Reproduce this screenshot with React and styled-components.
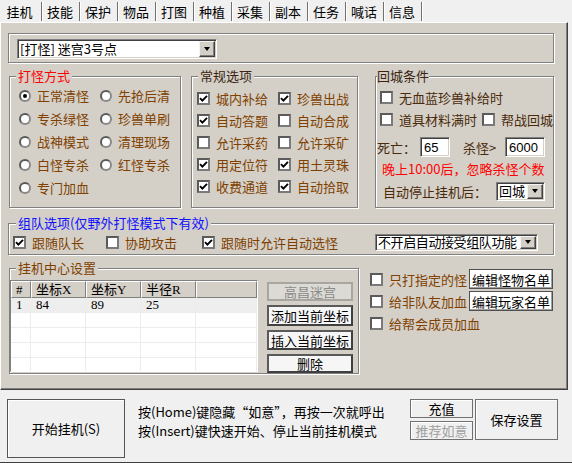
import React from 'react';
import styled, { createGlobalStyle } from 'styled-components';

const FACE = '#d4d0c8';
const BROWN = '#804000';

const GlobalStyle = createGlobalStyle`
  html, body {
    margin: 0;
    padding: 0;
    background: #f0f0f0;
  }
  body {
    font-family: "Noto Sans CJK SC", "Liberation Sans", sans-serif;
    font-size: 13px;
    color: #000;
  }
`;

const tabs = ['挂机', '技能', '保护', '物品', '打图', '种植', '采集', '副本', '任务', '喊话', '信息'];

const modes = [
  ['正常清怪', true], ['先抢后清', false],
  ['专杀绿怪', false], ['珍兽单刷', false],
  ['战神模式', false], ['清理现场', false],
  ['白怪专杀', false], ['红怪专杀', false],
  ['专门加血', false],
];

const general = [
  ['城内补给', true], ['珍兽出战', true],
  ['自动答题', true], ['自动合成', false],
  ['允许采药', false], ['允许采矿', false],
  ['用定位符', true], ['用土灵珠', true],
  ['收费通道', true], ['自动拾取', true],
];

const points = [{ n: 1, x: 84, y: 89, r: 25 }];

const Check = ({ on }) => (
  <Box>
    {on && (
      <svg width="9" height="9" viewBox="0 0 9 9">
        <path d="M1 4.2 3.4 6.6 8 1.8" fill="none" stroke="#000" strokeWidth="1.9" />
      </svg>
    )}
  </Box>
);

const Combo = ({ w, h, text, tight }) => (
  <ComboBox $w={w} $h={h}>
    <ComboText $tight={tight}>{text}</ComboText>
    <DropButton>
      <Arrow />
    </DropButton>
  </ComboBox>
);

const App = () => (
  <Window>
    <GlobalStyle />
    <TabStrip>
      {tabs.map((t, i) => (
        <Tab key={t} $w={i === 0 ? 43 : 38}>{t}</Tab>
      ))}
    </TabStrip>

    <Panel>
      <ComboFrame>
        <Combo w={200} h={20} text="[打怪] 迷宫3号点" />
      </ComboFrame>

      <GroupRow>
        <Group $w={172} $h={139} $ml={1}>
          <Legend $color="#ff0000">打怪方式</Legend>
          <RadioGrid>
            {modes.map(([label, on]) => (
              <Option key={label}>
                <Radio $on={on} />
                {label}
              </Option>
            ))}
          </RadioGrid>
        </Group>

        <Group $w={167} $h={139} $ml={10}>
          <Legend $color="#3a2410">常规选项</Legend>
          <CheckGrid>
            {general.map(([label, on]) => (
              <Option key={label}>
                <Check on={on} />
                {label}
              </Option>
            ))}
          </CheckGrid>
        </Group>

        <Group $w={179} $h={139} $ml={17}>
          <Legend $color="#3a2410" $ml={1} $pad={0}>回城条件</Legend>
          <ReturnBody>
            <Line $h={22} $indent={3}>
              <Option $color="#4a2a0a">
                <Check />
                无血蓝珍兽补给时
              </Option>
            </Line>
            <Line $h={22} $indent={3}>
              <Option $color="#4a2a0a">
                <Check />
                道具材料满时
              </Option>
              <Option $color="#4a2a0a" $ml={5}>
                <Check />
                帮战回城
              </Option>
            </Line>
            <Line $h={22} $mt={6}>
              <FieldLabel $w={43}>死亡：</FieldLabel>
              <Input $w={30}>65</Input>
              <FieldLabel $w={42} $ml={13}>杀怪&gt;</FieldLabel>
              <Input $w={40}>6000</Input>
            </Line>
            <Line $h={20} $indent={5}>
              <Warning>晚上10:00后，忽略杀怪个数</Warning>
            </Line>
            <Line $h={20} $mt={3} $indent={6}>
              <FieldLabel $w={113}>自动停止挂机后：</FieldLabel>
              <Combo w={49} h={19} text="回城" />
            </Line>
          </ReturnBody>
        </Group>
      </GroupRow>

      <Group $w={546} $h={39} $mt={8}>
        <Legend $color="#1010ff" $ml={7}>组队选项(仅野外打怪模式下有效)</Legend>
        <TeamBody>
          <Cell $w={93}>
            <Option><Check on />跟随队长</Option>
          </Cell>
          <Cell $w={96}>
            <Option><Check />协助攻击</Option>
          </Cell>
          <Cell $w={173}>
            <Option><Check on />跟随时允许自动选怪</Option>
          </Cell>
          <Combo w={163} h={17} text="不开启自动接受组队功能" tight />
        </TeamBody>
      </Group>

      <BottomRow>
        <Group $w={350} $h={113} $ml={1}>
          <Legend $color={BROWN}>挂机中心设置</Legend>
          <CenterBody>
            <ListView>
              <HeadCell>#</HeadCell>
              <HeadCell>坐标X</HeadCell>
              <HeadCell>坐标Y</HeadCell>
              <HeadCell>半径R</HeadCell>
              <HeadCell />
              {points.map(p => (
                <React.Fragment key={p.n}>
                  <RowCell $lit>{p.n}</RowCell>
                  <RowCell $lit>{p.x}</RowCell>
                  <RowCell $lit>{p.y}</RowCell>
                  <RowCell $lit>{p.r}</RowCell>
                  <RowCell $lit />
                </React.Fragment>
              ))}
              {Array.from({ length: 20 }, (_, i) => <RowCell key={i} />)}
            </ListView>
            <ButtonColumn>
              <MapButton>高昌迷宫</MapButton>
              <HeavyButton $h={21}>添加当前坐标</HeavyButton>
              <HeavyButton $h={20}>插入当前坐标</HeavyButton>
              <HeavyButton $h={19}>删除</HeavyButton>
            </ButtonColumn>
          </CenterBody>
        </Group>

        <SideColumn>
          <SideRow>
            <Option><Check />只打指定的怪</Option>
            <EditButton>编辑怪物名单</EditButton>
          </SideRow>
          <SideRow>
            <Option><Check />给非队友加血</Option>
            <EditButton>编辑玩家名单</EditButton>
          </SideRow>
          <SideRow>
            <Option><Check />给帮会成员加血</Option>
          </SideRow>
        </SideColumn>
      </BottomRow>
    </Panel>

    <Footer>
      <StartButton>开始挂机(S)</StartButton>
      <HintText>
        <div>按(Home)键隐藏“如意”，再按一次就呼出</div>
        <div>按(Insert)键快速开始、停止当前挂机模式</div>
      </HintText>
      <SmallButtons>
        <FlatButton $h={19}>充值</FlatButton>
        <FlatButton $h={19} $disabled>推荐如意</FlatButton>
      </SmallButtons>
      <FlatButton $w={83} $h={41} $big>保存设置</FlatButton>
    </Footer>
  </Window>
);

export default App;

const Window = styled.div`
  width: 572px;
  height: 463px;
  box-sizing: border-box;
  display: flex;
  flex-direction: column;
  background: #f0f0f0;
  border-bottom: 1px solid #404040;
  overflow: hidden;
`;

const TabStrip = styled.div`
  height: 22px;
  flex: none;
  display: flex;
  background: #f0f0f0;
`;

const Tab = styled.div`
  width: ${p => p.$w}px;
  box-sizing: border-box;
  margin: 2px 0 1px;
  display: flex;
  align-items: center;
  justify-content: center;
  padding-right: 3px;
  font-size: 13px;
  line-height: 15px;
  border-right: 1px solid #fff;
  box-shadow: inset -1px 0 #707070;
`;

const Panel = styled.div`
  width: 568px;
  height: 368px;
  flex: none;
  box-sizing: border-box;
  background: ${FACE};
  border-top: 1px solid #fff;
  border-left: 1px solid #fff;
  border-right: 1px solid #404040;
  border-bottom: 1px solid #404040;
  box-shadow: inset -1px -1px #808080;
  padding: 10px 0 0 7px;
  display: flex;
  flex-direction: column;
  align-items: flex-start;
`;

const ComboFrame = styled.div`
  width: 546px;
  height: 30px;
  box-sizing: border-box;
  border: 1px solid #808080;
  box-shadow: inset 1px 1px #fff, 1px 1px #fff;
  padding: 5px 0 0 8px;
`;

const ComboBox = styled.div`
  width: ${p => p.$w}px;
  height: ${p => p.$h}px;
  box-sizing: border-box;
  flex: none;
  display: flex;
  align-items: center;
  background: #fff;
  border: 1px solid;
  border-color: #808080 #fff #fff #808080;
  box-shadow: inset 1px 1px #404040, inset -1px -1px ${FACE};
  padding-left: 2px;
  color: #000;
`;

const ComboText = styled.span`
  flex: 1;
  min-width: 0;
  white-space: nowrap;
  line-height: 18px;
  letter-spacing: ${p => (p.$tight ? '-0.4px' : 'normal')};
`;

const DropButton = styled.div`
  width: 16px;
  align-self: stretch;
  box-sizing: border-box;
  margin: 1px 1px 1px 0;
  background: ${FACE};
  border: 1px solid;
  border-color: #f4f4f4 #404040 #404040 #f4f4f4;
  box-shadow: inset -1px -1px #808080;
  display: flex;
  align-items: center;
  justify-content: center;
`;

const Arrow = styled.span`
  width: 0;
  height: 0;
  border-left: 3.5px solid transparent;
  border-right: 3.5px solid transparent;
  border-top: 4px solid #000;
`;

const GroupRow = styled.div`
  display: flex;
  align-items: flex-start;
  margin-top: 6px;
`;

const Group = styled.fieldset`
  width: ${p => p.$w}px;
  height: ${p => p.$h}px;
  min-width: 0;
  box-sizing: border-box;
  margin: ${p => p.$mt || 0}px 0 0 ${p => p.$ml || 0}px;
  padding: 0;
  border: 1px solid #808080;
  box-shadow: inset 1px 1px #fff, 1px 1px #fff;
`;

const Legend = styled.legend`
  margin-left: ${p => p.$ml ?? 6}px;
  padding: 0 ${p => p.$pad ?? 2}px;
  font-size: 13px;
  line-height: 14px;
  color: ${p => p.$color};
  background: ${FACE};
  white-space: nowrap;
`;

const RadioGrid = styled.div`
  display: grid;
  grid-template-columns: 81px 1fr;
  grid-auto-rows: 23px;
  padding: 1px 0 0 9px;
`;

const CheckGrid = styled.div`
  display: grid;
  grid-template-columns: 81px 1fr;
  grid-auto-rows: 22px;
  padding: 4px 0 0 5px;
`;

const Option = styled.div`
  display: flex;
  align-items: center;
  gap: 6px;
  margin-left: ${p => p.$ml || 0}px;
  color: ${p => p.$color || BROWN};
  white-space: nowrap;
  line-height: 15px;
`;

const Radio = styled.span`
  width: 12px;
  height: 12px;
  flex: none;
  box-sizing: border-box;
  border-radius: 50%;
  background: #fff;
  border: 2px solid;
  border-color: #5a5a5a #8a8a8a #8a8a8a #5a5a5a;
  display: flex;
  align-items: center;
  justify-content: center;

  &::after {
    content: '';
    width: 4px;
    height: 4px;
    border-radius: 50%;
    background: ${p => (p.$on ? '#000' : 'transparent')};
  }
`;

const Box = styled.span`
  width: 13px;
  height: 13px;
  flex: none;
  box-sizing: border-box;
  background: #fff;
  border: 2px solid;
  border-color: #5a5a5a #7a7a7a #7a7a7a #5a5a5a;
  display: flex;
  align-items: center;
  justify-content: center;
`;

const ReturnBody = styled.div`
  display: flex;
  flex-direction: column;
  padding: 3px 0 0 1px;
`;

const Line = styled.div`
  height: ${p => p.$h}px;
  margin-top: ${p => p.$mt || 0}px;
  padding-left: ${p => p.$indent || 0}px;
  display: flex;
  align-items: center;
`;

const FieldLabel = styled.span`
  width: ${p => p.$w}px;
  margin-left: ${p => p.$ml || 0}px;
  flex: none;
  color: #4a2a0a;
  white-space: nowrap;
  line-height: 15px;
`;

const Input = styled.div`
  width: ${p => p.$w}px;
  height: 20px;
  box-sizing: border-box;
  flex: none;
  background: #fff;
  border: 1px solid;
  border-color: #808080 #fff #fff #808080;
  box-shadow: inset 1px 1px #404040, inset -1px -1px ${FACE};
  padding: 2px 0 0 3px;
  line-height: 15px;
  color: #000;
  font-family: "Liberation Sans", sans-serif;
`;

const Warning = styled.span`
  color: #ff0000;
  white-space: nowrap;
  line-height: 15px;
`;

const TeamBody = styled.div`
  height: 24px;
  display: flex;
  align-items: center;
  padding-left: 4px;
`;

const Cell = styled.div`
  width: ${p => p.$w}px;
  flex: none;
`;

const BottomRow = styled.div`
  display: flex;
  align-items: flex-start;
  margin-top: 6px;
`;

const CenterBody = styled.div`
  display: flex;
  align-items: flex-start;
  padding-top: 5px;
`;

const ListView = styled.div`
  width: 248px;
  height: 92px;
  box-sizing: border-box;
  overflow: hidden;
  background: #fff;
  border: 1px solid;
  border-color: #808080 #fff #fff #808080;
  box-shadow: inset 1px 1px #404040;
  display: grid;
  grid-template-columns: 20px 55px 55px 55px 1fr;
  grid-template-rows: 17px;
  grid-auto-rows: 15px;
  align-content: start;
  font-family: "Liberation Serif", "Noto Sans CJK SC", serif;
`;

const HeadCell = styled.div`
  box-sizing: border-box;
  background: ${FACE};
  border-top: 1px solid #fff;
  border-left: 1px solid #fff;
  border-right: 1px solid #808080;
  border-bottom: 1px solid #808080;
  padding-left: 4px;
  line-height: 15px;
  color: #000;
`;

const RowCell = styled.div`
  box-sizing: border-box;
  background: ${p => (p.$lit ? '#eeeeee' : '#fff')};
  border-right: 1px solid #ececec;
  border-bottom: 1px solid #ececec;
  padding-left: 5px;
  line-height: 14px;
  color: #000;
`;

const ButtonColumn = styled.div`
  display: flex;
  flex-direction: column;
  gap: 4px;
  margin-left: 9px;
  padding-top: 2px;
`;

const MapButton = styled.div`
  width: 86px;
  height: 19px;
  box-sizing: border-box;
  border: 2px solid #a8a6a0;
  background: #dcdad4;
  color: #8a8a8a;
  display: flex;
  align-items: center;
  justify-content: center;
  line-height: 15px;
`;

const HeavyButton = styled.div`
  width: 86px;
  height: ${p => p.$h}px;
  box-sizing: border-box;
  border: 2px solid;
  border-color: #5a5a5a #404040 #404040 #5a5a5a;
  background: #f6f6f6;
  color: #000;
  display: flex;
  align-items: center;
  justify-content: center;
  line-height: 15px;
`;

const SideColumn = styled.div`
  width: 183px;
  margin: 7px 0 0 11px;
  display: flex;
  flex-direction: column;
`;

const SideRow = styled.div`
  height: 22px;
  display: flex;
  align-items: center;
  justify-content: space-between;
`;

const EditButton = styled.div`
  width: 84px;
  height: 20px;
  box-sizing: border-box;
  background: #fff;
  border: 1px solid #505050;
  box-shadow: inset -1px -1px #a0a0a0;
  color: #000;
  display: flex;
  align-items: center;
  justify-content: center;
  line-height: 15px;
`;

const Footer = styled.div`
  flex: 1;
  display: flex;
  align-items: flex-start;
  padding: 9px 0 0 7px;
`;

const StartButton = styled.div`
  width: 118px;
  height: 59px;
  box-sizing: border-box;
  flex: none;
  border: 1px solid #555;
  box-shadow: inset 1px 1px #fff;
  background: #f0f0f0;
  display: flex;
  align-items: center;
  justify-content: center;
  line-height: 15px;
`;

const HintText = styled.div`
  width: 285px;
  flex: none;
  padding: 3px 0 0 13px;
  box-sizing: border-box;
  line-height: 19px;
  white-space: nowrap;
`;

const SmallButtons = styled.div`
  display: flex;
  flex-direction: column;
  gap: 3px;
`;

const FlatButton = styled.div`
  width: ${p => p.$w || 63}px;
  height: ${p => p.$h}px;
  margin-left: ${p => (p.$big ? 2 : 0)}px;
  box-sizing: border-box;
  flex: none;
  border: 1px solid #707070;
  box-shadow: inset 1px 1px #fff;
  background: #f0f0f0;
  color: ${p => (p.$disabled ? '#a0a0a0' : '#000')};
  display: flex;
  align-items: center;
  justify-content: center;
  line-height: 15px;
`;
